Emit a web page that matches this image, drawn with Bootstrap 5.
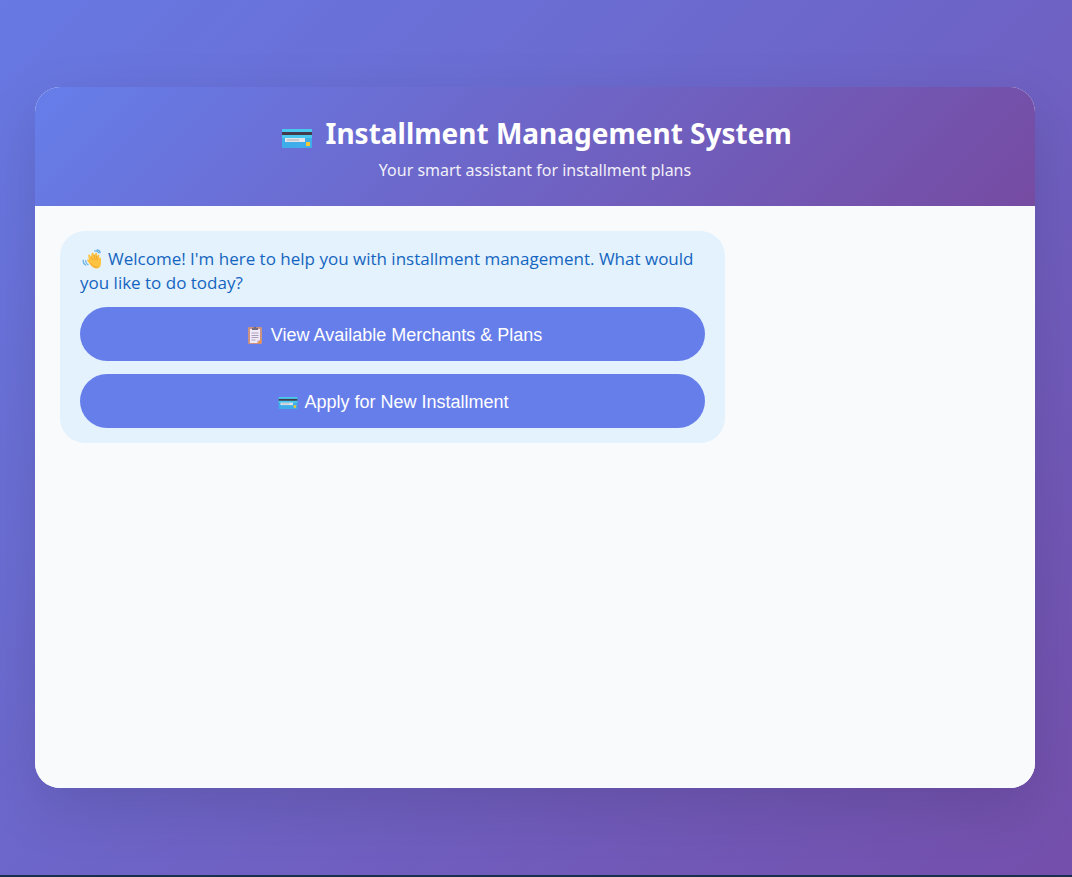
<!DOCTYPE html>
<html lang="en">
<head>
<meta charset="utf-8">
<meta name="viewport" content="width=device-width, initial-scale=1">
<title>Installment Management System</title>
<link href="https://cdn.jsdelivr.net/npm/bootstrap@5.3.0/dist/css/bootstrap.min.css" rel="stylesheet">
<style>
  body {
    font-family: "Open Sans", "Segoe UI", sans-serif;
    background: linear-gradient(135deg, #6779e3 0%, #744fab 100%);
    border-bottom: 2px solid #192f4e;
    padding-right: 2px;
  }
  .chat-shell {
    width: calc(100% - 40px);
    max-width: 1000px;
    height: 80vh;
    border-radius: 25px;
    background: #fff;
    box-shadow: 0 20px 60px rgba(0, 0, 0, .12);
  }
  .chat-head {
    background: linear-gradient(135deg, #667eea 0%, #764ba2 100%);
    padding: 24px 25px 21px;
  }
  .chat-title { font-family: "Noto Sans", "Segoe UI", sans-serif; font-size: 28px; line-height: 44px; }
  .chat-sub { font-family: "Noto Sans", "Segoe UI", sans-serif; font-size: 16px; line-height: 30px; opacity: .9; }
  .chat-body { background: #f8fafc; padding: 25px; }
  .bubble {
    width: 70%;
    padding: 16px 20px 15px;
    border-radius: 25px;
    background: #e3f2fd;
    color: #1565c0;
    font-size: 17px;
    line-height: 24px;
  }
  .option-list { gap: 13px; margin-top: 12px; }
  .btn-option {
    --bs-btn-color: #fff;
    --bs-btn-bg: #667eea;
    --bs-btn-hover-color: #fff;
    --bs-btn-hover-bg: #5a6fd8;
    --bs-btn-active-color: #fff;
    --bs-btn-active-bg: #5a6fd8;
    --bs-btn-border-width: 0;
    --bs-btn-font-family: "Liberation Sans", Arial, sans-serif;
    --bs-btn-font-size: 18px;
    --bs-btn-line-height: 24px;
    padding: 16px 12px 14px;
  }
  .emoji-sm { width: 24px; height: 20px; margin-right: 4px; vertical-align: -4px; }
  .emoji-lg { width: 38px; height: 32px; margin-right: 2px; vertical-align: -9px; }
</style>
</head>
<body class="min-vh-100 d-flex align-items-center justify-content-center">
<svg class="d-none" aria-hidden="true">
  <symbol id="credit-card" viewBox="0 0 38 32">
    <rect x="4" y="8" width="30" height="19" rx="1" fill="#3fade9"/>
    <path d="M4 17V9q0-1 1-1h28q1 0 1 1v8z" fill="#4ac8f0"/>
    <rect x="4" y="11" width="30" height="3" fill="#433b4b"/>
    <rect x="7" y="17" width="20" height="4" fill="#e1e4e8"/>
    <path d="M9 19h12" stroke="#aab0b8"/>
    <rect x="28" y="21" width="4" height="4" rx=".5" fill="#f6c832"/>
  </symbol>
  <symbol id="clipboard" viewBox="0 0 24 20">
    <rect x="5" y="2" width="14" height="17" rx="1" fill="#cb927f"/>
    <path d="M7 4h10v11l-3 3H7z" fill="#f1eafa"/>
    <path d="M14 18l4-4v4z" fill="#ee9145"/>
    <path d="M14 18v-3h3z" fill="#cfc6dd"/>
    <path d="M9 5V3h1.500a1.500 1.500 0 0 1 3 0H15v2z" fill="#736b80"/>
    <path d="M8.500 8h7M8.500 10.500h7M8.500 12.500h7M8.500 15h4" stroke="#a99fb7"/>
  </symbol>
  <symbol id="wave" viewBox="0 0 24 20">
    <path d="M8.500 13.500C7 12 6.800 10.500 7.800 10L9 11 8.200 7c-.2-1.500 1.200-2 1.900-.8L11 8l.6-3.500c.3-1.400 1.900-1.300 2 .1l.3 1.600 1.500-1.900c.8-1 2.100-.3 1.700.9L16.600 7l1.200-.9c1-.7 1.900.3 1.500 1.300l-.5 1.200c1.400-.6 2.200.1 2.200 1.400v4.500c0 3-2 5-5 5-2.900 0-4.700-2.500-7.500-6z" fill="#ffc342"/>
    <path d="M11 8l1.800 3M13.900 6.200l1.300 4.300M16.600 7l.6 4M11 14.500c1.500 3 4.500 4.500 7 3.500" fill="none" stroke="#e99929" stroke-width=".8" stroke-linecap="round"/>
    <path d="M14.500 2c2-.6 3.600.2 4.500 2M17 .9c1.700 0 2.800 1 3.200 2.600M5.600 11.500c0 2 .8 3.300 2.400 4.200M3.200 11c-.3 2.200.7 4 2.500 5" fill="none" stroke="#64aee2" stroke-width="1.200" stroke-linecap="round"/>
  </symbol>
</svg>

<main class="chat-shell d-flex flex-column overflow-hidden">
  <header class="chat-head text-center text-white">
    <h1 class="chat-title fw-bold mb-0"><svg class="emoji-lg" role="img" aria-label="Credit card"><use href="#credit-card"/></svg> Installment Management System</h1>
    <p class="chat-sub mb-0">Your smart assistant for installment plans</p>
  </header>
  <section class="chat-body flex-grow-1 overflow-auto">
    <div class="bubble">
      <p class="mb-0"><svg class="emoji-sm" role="img" aria-label="Waving hand"><use href="#wave"/></svg>Welcome! I'm here to help you with installment management. What would you like to do today?</p>
      <div class="option-list d-grid">
        <button type="button" class="btn btn-option rounded-pill"><svg class="emoji-sm" aria-hidden="true"><use href="#clipboard"/></svg>View Available Merchants &amp; Plans</button>
        <button type="button" class="btn btn-option rounded-pill"><svg class="emoji-sm" aria-hidden="true"><use href="#credit-card"/></svg>Apply for New Installment</button>
      </div>
    </div>
  </section>
</main>
<script src="https://cdn.jsdelivr.net/npm/bootstrap@5.3.0/dist/js/bootstrap.bundle.min.js"></script>
</body>
</html>
